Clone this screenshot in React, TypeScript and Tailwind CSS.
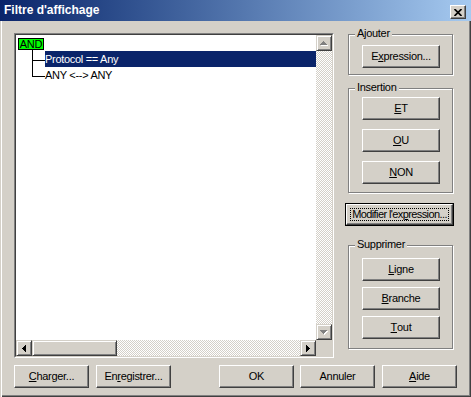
import React from "react";

const raised =
  "bg-[#d4d0c8] border border-t-white border-l-white border-r-[#404040] border-b-[#404040] shadow-[inset_-1px_-1px_0_#808080]";
const scrollRaised =
  "bg-[#d4d0c8] border border-t-[#d4d0c8] border-l-[#d4d0c8] border-r-[#404040] border-b-[#404040] shadow-[inset_1px_1px_0_#ffffff,inset_-1px_-1px_0_#808080]";
const checker =
  "bg-[repeating-conic-gradient(#ffffff_0_25%,#d4d0c8_0_50%)] bg-[length:2px_2px]";

function Btn({ w, children }: { w: string; children: React.ReactNode }) {
  return (
    <div
      className={`${w} h-[23px] shrink-0 flex items-center justify-center whitespace-nowrap ${raised}`}
    >
      {children}
    </div>
  );
}

function U({ children }: { children: React.ReactNode }) {
  return <span className="underline underline-offset-[1px]">{children}</span>;
}

function Group({
  label,
  className,
  children,
}: {
  label: string;
  className: string;
  children: React.ReactNode;
}) {
  return (
    <div
      className={`relative border border-[#808080] shadow-[1px_1px_0_#ffffff,inset_1px_1px_0_#ffffff] ${className}`}
    >
      <span className="absolute left-[6px] top-[-8px] px-[2px] bg-[#d4d0c8] leading-[13px]">
        {label}
      </span>
      {children}
    </div>
  );
}

function ArrowUp({ disabled }: { disabled?: boolean }) {
  const px = (dx: number, dy: number, fill: string) => (
    <g fill={fill}>
      <rect x={3 + dx} y={0 + dy} width={1} height={1} />
      <rect x={2 + dx} y={1 + dy} width={3} height={1} />
      <rect x={1 + dx} y={2 + dy} width={5} height={1} />
      <rect x={0 + dx} y={3 + dy} width={7} height={1} />
    </g>
  );
  return (
    <svg width="8" height="5" viewBox="0 0 8 5" shapeRendering="crispEdges">
      {disabled && px(1, 1, "#ffffff")}
      {px(0, 0, disabled ? "#808080" : "#000000")}
    </svg>
  );
}

function ArrowDown({ disabled }: { disabled?: boolean }) {
  const px = (dx: number, dy: number, fill: string) => (
    <g fill={fill}>
      <rect x={0 + dx} y={0 + dy} width={7} height={1} />
      <rect x={1 + dx} y={1 + dy} width={5} height={1} />
      <rect x={2 + dx} y={2 + dy} width={3} height={1} />
      <rect x={3 + dx} y={3 + dy} width={1} height={1} />
    </g>
  );
  return (
    <svg width="8" height="5" viewBox="0 0 8 5" shapeRendering="crispEdges">
      {disabled && px(1, 1, "#ffffff")}
      {px(0, 0, disabled ? "#808080" : "#000000")}
    </svg>
  );
}

function ArrowLeft() {
  return (
    <svg width="4" height="7" viewBox="0 0 4 7" shapeRendering="crispEdges">
      <g fill="#000000">
        <rect x={0} y={3} width={1} height={1} />
        <rect x={1} y={2} width={1} height={3} />
        <rect x={2} y={1} width={1} height={5} />
        <rect x={3} y={0} width={1} height={7} />
      </g>
    </svg>
  );
}

function ArrowRight() {
  return (
    <svg width="4" height="7" viewBox="0 0 4 7" shapeRendering="crispEdges">
      <g fill="#000000">
        <rect x={0} y={0} width={1} height={7} />
        <rect x={1} y={1} width={1} height={5} />
        <rect x={2} y={2} width={1} height={3} />
        <rect x={3} y={3} width={1} height={1} />
      </g>
    </svg>
  );
}

export default function App() {
  return (
    <div className="w-[471px] h-[397px] bg-[#d4d0c8] flex flex-col text-[11px] text-black tracking-[-0.3px] font-['Liberation_Sans',Arial,sans-serif] shadow-[inset_1px_0_0_#d4d0c8,inset_2px_0_0_#ffffff,inset_-1px_-1px_0_#404040,inset_-2px_-2px_0_#808080]">
      {/* Title bar */}
      <div className="h-[21px] shrink-0 flex items-start bg-gradient-to-r from-[#0a246a] to-[#a6caf0] pl-[4px] pr-[5px]">
        <div className="flex-1 text-white font-bold text-[12px] tracking-normal leading-[21px]">
          Filtre d'affichage
        </div>
        <div
          className={`mt-[5px] w-[16px] h-[14px] flex items-center justify-center ${raised}`}
        >
          <svg width="8" height="7" viewBox="0 0 8 7">
            <path d="M0.5 0 L7.5 7 M7.5 0 L0.5 7" stroke="#000" strokeWidth="1.7" />
          </svg>
        </div>
      </div>

      {/* Body */}
      <div className="flex flex-col pt-[12px] pl-[14px]">
        <div className="flex items-start">
          {/* List box */}
          <div className="w-[320px] h-[325px] shrink-0 border border-t-[#808080] border-l-[#808080] border-r-white border-b-white">
            <div className="w-full h-full border border-t-[#404040] border-l-[#404040] border-r-[#d4d0c8] border-b-[#d4d0c8] grid grid-cols-[300px_16px] grid-rows-[305px_16px]">
              {/* Content */}
              <div className="bg-white overflow-hidden flex flex-col">
                <div className="h-[16px] flex flex-col">
                  <div className="mt-[3px] ml-[2px] w-[26px] h-[12px] bg-[#00ff00] border border-black flex items-center justify-center leading-none">
                    AND
                  </div>
                  <div className="ml-[16px] w-px h-px bg-black" />
                </div>
                <div className="flex h-[16px]">
                  <div className="w-[29px] shrink-0 pl-[16px]">
                    <div className="h-[10px] border-l border-b border-black" />
                    <div className="h-[6px] border-l border-black" />
                  </div>
                  <div className="flex-1 bg-[#0a246a] text-white leading-[16px] whitespace-nowrap">
                    Protocol == Any
                  </div>
                </div>
                <div className="flex h-[16px]">
                  <div className="w-[29px] shrink-0 pl-[16px]">
                    <div className="h-[10px] border-l border-b border-black" />
                  </div>
                  <div className="flex-1 leading-[16px] whitespace-nowrap">
                    ANY &lt;--&gt; ANY
                  </div>
                </div>
              </div>
              {/* Vertical scrollbar */}
              <div className={`flex flex-col ${checker}`}>
                <div className={`h-[16px] w-[16px] flex items-center justify-center ${scrollRaised}`}>
                  <ArrowUp disabled />
                </div>
                <div className="flex-1" />
                <div className={`h-[16px] w-[16px] flex items-center justify-center ${scrollRaised}`}>
                  <ArrowDown disabled />
                </div>
              </div>
              {/* Horizontal scrollbar */}
              <div className={`flex ${checker}`}>
                <div className={`h-[16px] w-[16px] flex items-center justify-center ${scrollRaised}`}>
                  <ArrowLeft />
                </div>
                <div className={`h-[16px] w-[85px] ${scrollRaised}`} />
                <div className="flex-1" />
                <div className={`h-[16px] w-[16px] flex items-center justify-center ${scrollRaised}`}>
                  <ArrowRight />
                </div>
              </div>
              <div className="bg-[#d4d0c8]" />
            </div>
          </div>

          {/* Right column */}
          <div className="ml-[11px] w-[109px] flex flex-col">
            <Group label="Ajouter" className="mt-[1px] ml-[3px] w-[105px] h-[41px] pt-[10px] pl-[13px]">
              <Btn w="w-[78px]">
                E<U>x</U>pression...
              </Btn>
            </Group>
            <Group
              label="Insertion"
              className="mt-[13px] ml-[3px] w-[105px] h-[105px] pt-[8px] pl-[13px] flex flex-col gap-[9px]"
            >
              <Btn w="w-[78px]">
                <U>E</U>T
              </Btn>
              <Btn w="w-[78px]">
                <U>O</U>U
              </Btn>
              <Btn w="w-[78px]">
                <U>N</U>ON
              </Btn>
            </Group>
            <div className="mt-[10px] w-[109px] h-[23px] border border-black">
              <div className={`w-full h-full p-[3px] ${raised}`}>
                <div className="w-full h-full border border-dotted border-black flex items-center justify-center whitespace-nowrap tracking-[-0.6px]">
                  Modifier l'ex<U>p</U>ression...
                </div>
              </div>
            </div>
            <Group
              label="Supprimer"
              className="mt-[19px] ml-[3px] w-[105px] h-[104px] pt-[12px] pl-[13px] flex flex-col gap-[6px]"
            >
              <Btn w="w-[78px]">
                <U>L</U>igne
              </Btn>
              <Btn w="w-[78px]">
                <U>B</U>ranche
              </Btn>
              <Btn w="w-[78px]">
                <U>T</U>out
              </Btn>
            </Group>
          </div>
        </div>

        {/* Bottom buttons */}
        <div className="mt-[7px] flex">
          <Btn w="w-[75px]">
            <U>C</U>harger...
          </Btn>
          <div className="ml-[7px]">
            <Btn w="w-[75px]">
              En<U>r</U>egistrer...
            </Btn>
          </div>
          <div className="ml-[48px]">
            <Btn w="w-[75px]">OK</Btn>
          </div>
          <div className="ml-[6px]">
            <Btn w="w-[75px]">Annuler</Btn>
          </div>
          <div className="ml-[7px]">
            <Btn w="w-[75px]">
              <U>A</U>ide
            </Btn>
          </div>
        </div>
      </div>
    </div>
  );
}
